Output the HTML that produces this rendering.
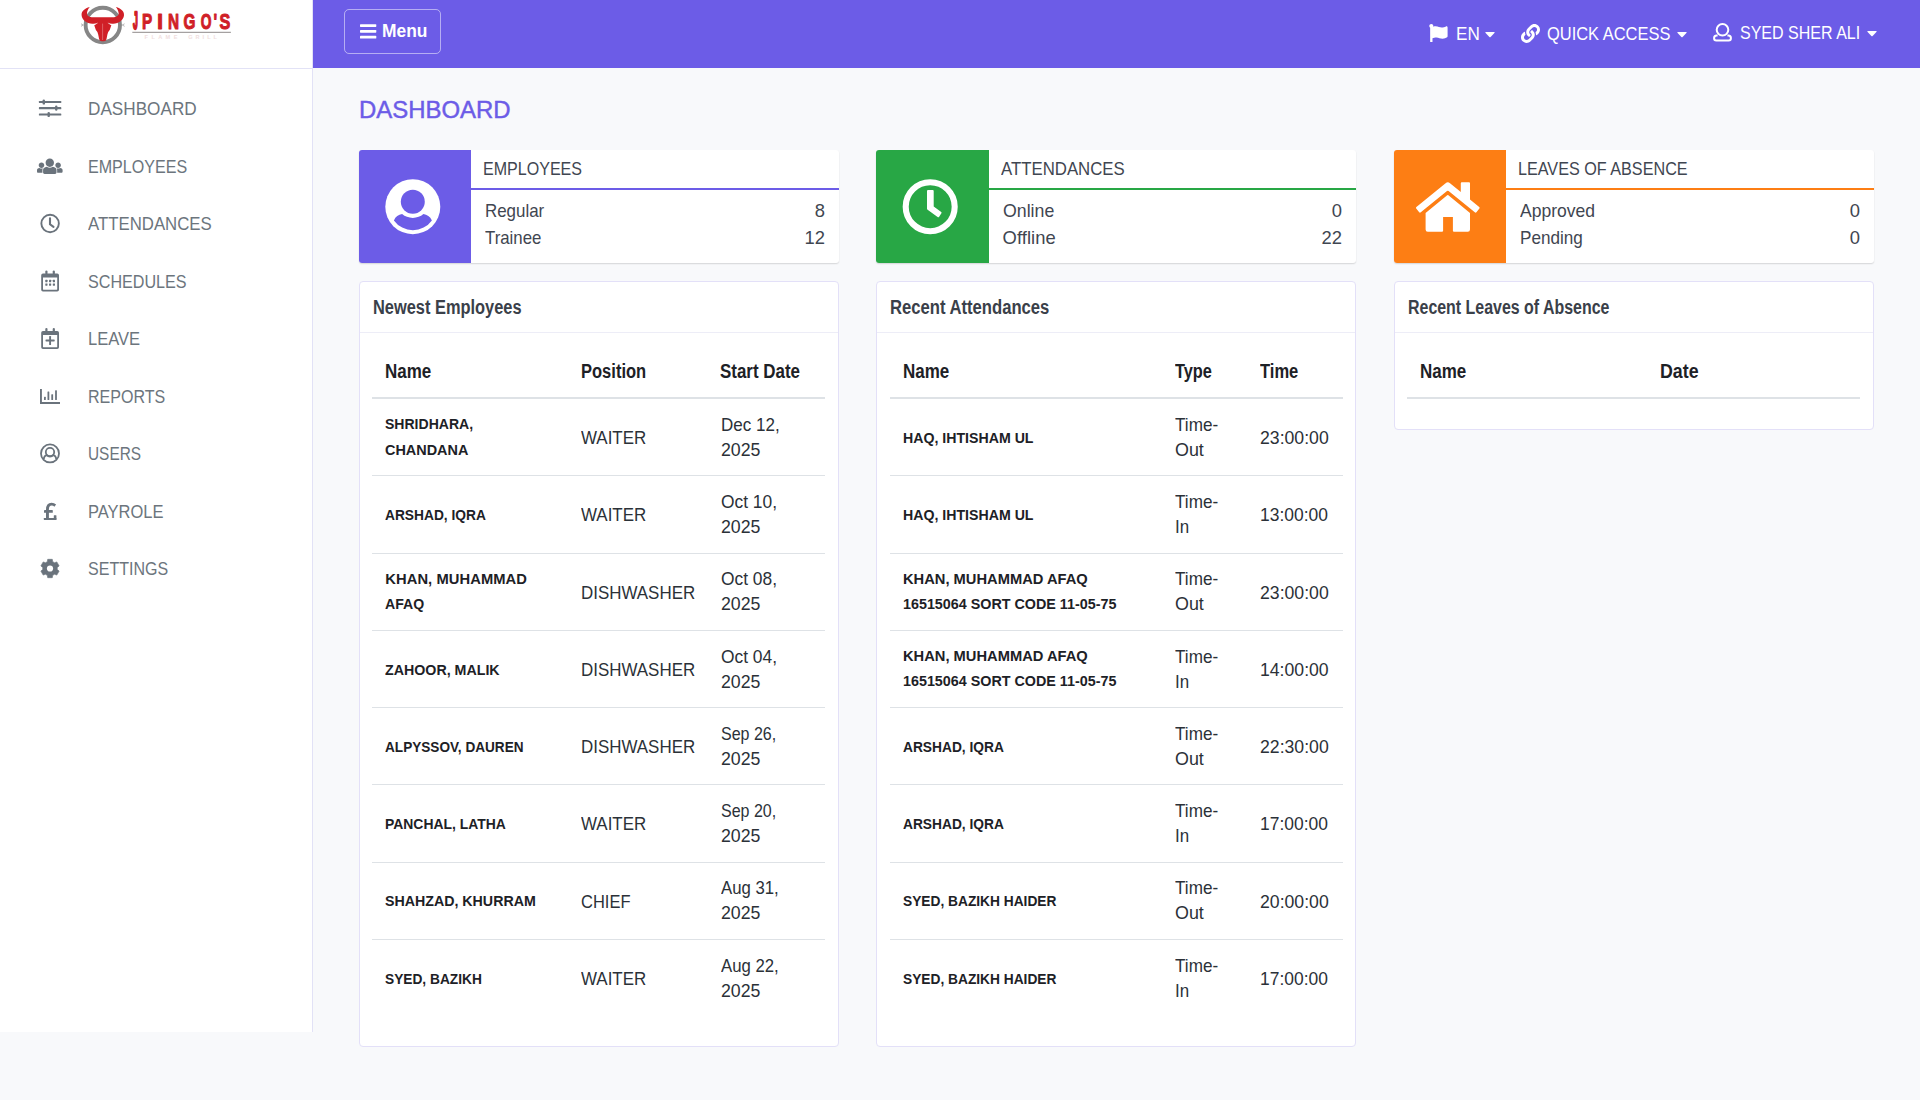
<!DOCTYPE html>
<html lang="en">
<head>
<meta charset="utf-8">
<title>Dashboard</title>
<style>
*{box-sizing:border-box;margin:0;padding:0}
html,body{width:1920px;height:1100px;overflow:hidden}
body{background:#f8f9fb;font-family:"Liberation Sans",sans-serif;color:#212529;font-size:17.6px;line-height:25.14px;position:relative}
svg{display:block}
.t{white-space:nowrap;display:inline-block;transform-origin:0 50%}
#sidebar{position:absolute;left:0;top:0;width:313px;height:1032px;background:#fff;border-right:1px solid #e2e2f6}
#logo{position:absolute;left:0;top:0;width:312px;height:69px;border-bottom:1px solid #e2e2f6}
#nav{position:absolute;left:0;top:0;width:312px;list-style:none}
#nav li{height:80px;position:absolute;left:0;width:312px;color:#6c757d;font-size:18px;line-height:80px;white-space:nowrap}
#nav li i{position:absolute;left:37px;top:28px;width:26px;height:24px;display:flex;align-items:center;justify-content:center}
#nav li b{position:absolute;left:87.6px;font-weight:normal}
#topbar{position:absolute;left:313px;top:0;width:1607px;height:68px;background:#6c5ce7;color:#fff}
#menubtn{position:absolute;left:31px;top:9px;width:97px;height:45px;border:1px solid rgba(255,255,255,.5);border-radius:5px}
#menubtn i{position:absolute;left:15px;top:13.6px}
#menubtn .t{position:absolute;left:36.5px;top:0;line-height:41.7px;font-size:19.2px;font-weight:bold}
.tb{position:absolute;top:0;height:68px;line-height:68px;font-size:18px;white-space:nowrap}
.tbi{position:absolute}
h1{position:absolute;left:358.7px;top:93.1px;font-size:24px;line-height:34px;font-weight:normal;color:#6c5ce7;white-space:nowrap;-webkit-text-stroke:.45px #6c5ce7}
.stat{position:absolute;top:150px;width:480px;height:113px;background:#fff;border-radius:3px;box-shadow:0 1px 1.5px rgba(0,0,0,.14);overflow:hidden}
.stat .ib{position:absolute;left:0;top:0;width:112px;height:113px}
.stat .tt{position:absolute;left:112px;top:0;right:0;height:40px;border-bottom:2px solid;padding-left:12px;font-size:18px;line-height:39px;color:#3f4651;white-space:nowrap}
.stat .rw{position:absolute;left:125.5px;right:14px;font-size:18.4px;line-height:27px;color:#3f4651}
.stat .rw b{font-weight:normal;float:right}
.panel{position:absolute;top:281px;width:480px;background:#fff;border:1px solid #e3e0f8;border-radius:4px}
.panel .ph{height:51px;border-bottom:1px solid #ededf7;padding-left:12.5px;font-size:19.4px;font-weight:bold;line-height:51.2px;color:#3a4049;white-space:nowrap}
.panel .pb{padding:11.84px 12px 0 12px}
table{border-collapse:collapse;table-layout:fixed;width:453px}
th{text-align:left;font-size:19.4px;font-weight:bold;color:#1d2126;padding:13.3px 0 12.7px 13px;border-bottom:2px solid #dee2e6;line-height:26.29px;white-space:nowrap}
td{padding:13.5px 0 12.46px 13.3px;border-top:1px solid #dee2e6;vertical-align:middle;font-size:18.4px;line-height:25.14px;color:#2b3138;height:77.25px;white-space:nowrap}
tbody tr:first-child td{border-top:none}
td.m{padding-top:12.7px;padding-bottom:13.26px}
td.n .t{position:relative;top:-1.4px;line-height:1;font-size:14.72px;font-weight:bold;color:#1d2126}
</style>
</head>
<body>
<div id="sidebar">
<div id="logo"><svg width="312" height="68" viewBox="0 0 312 68"><g transform="translate(76,0)"><circle cx="26.8" cy="25" r="17.2" fill="none" stroke="#868686" stroke-width="3.9"/><path d="M5 23.8l2.3 1.2-2.300 1.300M48.600 23.800l-2.300 1.200 2.300 1.300" stroke="#9a9a9a" stroke-width=".7" fill="none"/><path d="M26.80 17.30L15.60 17.30C12.60 17.00 10.60 15.00 11.00 13.00C11.30 10.60 12.30 8.60 13.80 7.00C8.60 8.20 5.20 11.50 5.60 15.20C6.00 20.00 11.50 24.30 17.50 23.70C19.00 23.60 20.50 23.20 21.80 22.70L18.20 25.50C19.00 26.80 19.20 28.60 19.90 29.90L21.40 31.90L22.20 34.60L23.10 39.00Q23.50 41.30 25.60 41.30L26.80 41.30L28.00 41.30Q30.10 41.30 30.50 39.00L31.40 34.60L32.20 31.90L33.70 29.90C34.40 28.60 34.60 26.80 35.40 25.50L31.80 22.70C33.10 23.20 34.60 23.60 36.10 23.70C42.10 24.30 47.60 20.00 48.00 15.20C48.40 11.50 45.00 8.20 39.80 7.00C41.30 8.60 42.30 10.60 42.60 13.00C43.00 15.00 41.00 17.00 38.00 17.30L26.80 17.30Z" fill="#d01f27"/><path d="M26.6 23.6V40M21.8 22.9L18.700 24.600M31.800 22.900L34.900 24.600" stroke="#fff" stroke-opacity=".55" stroke-width=".55" fill="none"/></g><g aria-label="JPINGO&#39;S"><text transform="translate(132.9,29.2) scale(0.36,1)" font-family="Liberation Sans, sans-serif" font-weight="bold" font-size="23.9" fill="#d01f27" stroke="#d01f27" stroke-width="1.9" stroke-linejoin="round" style="vector-effect:non-scaling-stroke">J</text><text transform="translate(141.9,29.4) scale(0.7,1)" font-family="Liberation Sans, sans-serif" font-weight="bold" font-size="21.9" fill="#d01f27" stroke="#d01f27" stroke-width="0.9" stroke-linejoin="round" style="vector-effect:non-scaling-stroke">P</text><text transform="translate(157.0,29.4) scale(1.0,1)" font-family="Liberation Sans, sans-serif" font-weight="bold" font-size="21.9" fill="#d01f27" stroke="#d01f27" stroke-width="0.9" stroke-linejoin="round" style="vector-effect:non-scaling-stroke">I</text><text transform="translate(168.0,29.4) scale(0.7,1)" font-family="Liberation Sans, sans-serif" font-weight="bold" font-size="21.9" fill="#d01f27" stroke="#d01f27" stroke-width="0.9" stroke-linejoin="round" style="vector-effect:non-scaling-stroke">N</text><text transform="translate(183.4,29.4) scale(0.7,1)" font-family="Liberation Sans, sans-serif" font-weight="bold" font-size="21.9" fill="#d01f27" stroke="#d01f27" stroke-width="0.9" stroke-linejoin="round" style="vector-effect:non-scaling-stroke">G</text><text transform="translate(200.7,29.4) scale(0.63,1)" font-family="Liberation Sans, sans-serif" font-weight="bold" font-size="21.9" fill="#d01f27" stroke="#d01f27" stroke-width="0.9" stroke-linejoin="round" style="vector-effect:non-scaling-stroke">O</text><text transform="translate(213.6,29.4) scale(0.7,1)" font-family="Liberation Sans, sans-serif" font-weight="bold" font-size="21.9" fill="#d01f27" stroke="#d01f27" stroke-width="0.9" stroke-linejoin="round" style="vector-effect:non-scaling-stroke">'</text><text transform="translate(219.4,29.4) scale(0.74,1)" font-family="Liberation Sans, sans-serif" font-weight="bold" font-size="21.9" fill="#d01f27" stroke="#d01f27" stroke-width="0.9" stroke-linejoin="round" style="vector-effect:non-scaling-stroke">S</text></g><rect x="132.3" y="31.8" width="98.6" height="1" fill="#8f8b8b"/><text x="144.6" y="39" font-family="Liberation Sans, sans-serif" font-weight="bold" font-size="5.6" fill="#f0dede" textLength="32.8" lengthAdjust="spacing">FLAME</text><text x="188.2" y="39" font-family="Liberation Sans, sans-serif" font-weight="bold" font-size="5.6" fill="#f0dede" textLength="28.8" lengthAdjust="spacing">GRILL</text></svg></div>
<ul id="nav">
<li style="top:68px"><i><svg width="26" height="24" viewBox="0 0 26 24" style=""><g transform="translate(0,0.60)"><g fill="#6a737c">
<rect x="1.9" y="4.3" width="22.4" height="2.2" rx=".6"/><rect x="1.9" y="10.5" width="22.4" height="2.2" rx=".6"/><rect x="1.9" y="16.8" width="22.4" height="2.2" rx=".6"/>
<rect x="5.6" y="2.8" width="2.4" height="5.2" rx="1.2"/><rect x="18.05" y="9" width="2.4" height="5.2" rx="1.2"/><rect x="10.5" y="15.3" width="2.4" height="5.2" rx="1.2"/></g></g></svg></i><b style="top:1.30px"><span class="t nv" style="transform:scaleX(0.9533)">DASHBOARD</span></b></li>
<li style="top:126px"><i><svg width="25.6" height="20.48" viewBox="0 0 640 512" style=""><g transform="translate(0,0.10)"><path fill="#6a737c" d="M320 64c57.99 0 105 47.01 105 105s-47.01 105-105 105-105-47.01-105-105S262.01 64 320 64zm113.463 217.366l-39.982-9.996c-49.168 35.365-108.766 27.473-146.961 0l-39.982 9.996C174.485 289.379 152 318.177 152 351.216V412c0 19.882 16.118 36 36 36h264c19.882 0 36-16.118 36-36v-60.784c0-33.039-22.485-61.837-54.537-69.85zM528 300c38.66 0 70-31.34 70-70s-31.34-70-70-70-70 31.34-70 70 31.34 70 70 70zm-416 0c38.66 0 70-31.34 70-70s-31.34-70-70-70-70 31.34-70 70 31.34 70 70 70zm24 112v-60.784c0-16.551 4.593-32.204 12.703-45.599-29.988 14.72-63.336 8.708-85.69-7.37l-26.655 6.664C14.99 310.252 0 329.452 0 351.477V392c0 13.255 10.745 24 24 24h112.169a52.417 52.417 0 0 1-.169-4zm467.642-107.09l-26.655-6.664c-27.925 20.086-60.89 19.233-85.786 7.218C499.369 318.893 504 334.601 504 351.216V412c0 1.347-.068 2.678-.169 4H616c13.255 0 24-10.745 24-24v-40.523c0-22.025-14.99-41.225-36.358-46.567z"/></g></svg></i><b style="top:0.80px"><span class="t nv" style="transform:scaleX(0.8933)">EMPLOYEES</span></b></li>
<li style="top:183px"><i><svg width="26" height="24" viewBox="0 0 26 24" style=""><g transform="translate(0,0.60)"><circle cx="13.1" cy="11.9" r="8.75" fill="none" stroke="#6a737c" stroke-width="1.9"/>
<path d="M13 6.6V12.7L16.5 15.2" fill="none" stroke="#6a737c" stroke-width="2.1" stroke-linecap="round" stroke-linejoin="miter"/></g></svg></i><b style="top:1.30px"><span class="t nv" style="transform:scaleX(0.9323)">ATTENDANCES</span></b></li>
<li style="top:241px"><i><svg width="26" height="24" viewBox="0 0 26 24" style=""><g transform="translate(0,0.10)"><g fill="#6a737c"><rect x="8.3" y="1.4" width="2.2" height="4.2" rx="1.1"/><rect x="15.7" y="1.4" width="2.2" height="4.2" rx="1.1"/>
<path fill-rule="evenodd" d="M6 4.3H20.2A1.8 1.8 0 0 1 22 6.1V20.6A1.8 1.8 0 0 1 20.2 22.4H6A1.8 1.8 0 0 1 4.2 20.6V6.1A1.8 1.8 0 0 1 6 4.3ZM6 8.4V20.2A.4 .4 0 0 0 6.4 20.6H19.8A.4 .4 0 0 0 20.2 20.2V8.4Z"/><rect x="8.3" y="10.75" width="2.2" height="2.3" rx=".4"/><rect x="12.0" y="10.75" width="2.2" height="2.3" rx=".4"/><rect x="15.799999999999999" y="10.75" width="2.2" height="2.3" rx=".4"/><rect x="8.3" y="14.35" width="2.2" height="2.3" rx=".4"/><rect x="12.0" y="14.35" width="2.2" height="2.3" rx=".4"/><rect x="15.799999999999999" y="14.35" width="2.2" height="2.3" rx=".4"/></g></g></svg></i><b style="top:0.80px"><span class="t nv" style="transform:scaleX(0.8962)">SCHEDULES</span></b></li>
<li style="top:298px"><i><svg width="26" height="24" viewBox="0 0 26 24" style=""><g transform="translate(0,0.60)"><g fill="#6a737c"><rect x="8.3" y="1.4" width="2.2" height="4.2" rx="1.1"/><rect x="15.7" y="1.4" width="2.2" height="4.2" rx="1.1"/>
<path fill-rule="evenodd" d="M6 4.3H20.2A1.8 1.8 0 0 1 22 6.1V20.6A1.8 1.8 0 0 1 20.2 22.4H6A1.8 1.8 0 0 1 4.2 20.6V6.1A1.8 1.8 0 0 1 6 4.3ZM6 8.4V20.2A.4 .4 0 0 0 6.4 20.6H19.8A.4 .4 0 0 0 20.2 20.2V8.4Z"/><rect x="8.5" y="12.9" width="9.2" height="1.9" rx=".6"/><rect x="12.15" y="9.3" width="1.9" height="9.2" rx=".6"/></g></g></svg></i><b style="top:1.30px"><span class="t nv" style="transform:scaleX(0.9193)">LEAVE</span></b></li>
<li style="top:356px"><i><svg width="26" height="24" viewBox="0 0 26 24" style=""><g transform="translate(0,0.10)"><g fill="#6a737c"><path d="M3 5H4.9V17.9H23V19.8H3Z"/>
<rect x="7" y="12.6" width="1.8" height="3.2" rx=".5"/><rect x="10.5" y="7.5" width="1.8" height="8.3" rx=".5"/><rect x="14.3" y="10.1" width="1.8" height="5.7" rx=".5"/><rect x="18.1" y="6.1" width="1.8" height="9.7" rx=".5"/></g></g></svg></i><b style="top:0.80px"><span class="t nv" style="transform:scaleX(0.8917)">REPORTS</span></b></li>
<li style="top:413px"><i><svg width="26" height="24" viewBox="0 0 26 24" style=""><g transform="translate(0,0.60)"><g fill="none" stroke="#6a737c" stroke-width="1.8"><circle cx="13" cy="11.8" r="9"/><circle cx="13" cy="10.4" r="4.2"/>
<path d="M6.7 17.6C7 15 8.200 13.700 9.700 13.500C10.600 14.500 11.700 15 13 15C14.300 15 15.400 14.500 16.300 13.500C17.800 13.700 19 15 19.300 17.600" stroke-linejoin="round"/></g></g></svg></i><b style="top:1.30px"><span class="t nv" style="transform:scaleX(0.8556)">USERS</span></b></li>
<li style="top:471px"><i><svg width="26" height="24" viewBox="0 0 26 24" style=""><g transform="translate(0,0.10)"><g fill="#6a737c"><path d="M9 20.8V10.6Q9 3.7 14.6 3.7Q17.2 3.7 19.1 5.4L17.4 7.6Q16.2 6.5 14.7 6.5Q11.9 6.5 11.9 10.4V20.8Z"/>
<rect x="7" y="11" width="8.8" height="2.7" rx=".4"/><rect x="6.8" y="18.9" width="12.6" height="1.9" rx=".4"/><rect x="16.8" y="16.1" width="2.6" height="4.7" rx=".4"/></g></g></svg></i><b style="top:0.80px"><span class="t nv" style="transform:scaleX(0.9156)">PAYROLE</span></b></li>
<li style="top:528px"><i><svg width="26" height="24" viewBox="0 0 26 24" style=""><g transform="translate(0,0.60)"><path d="M10.30 5.10L10.70 2.70L15.30 2.70L15.70 5.10A6.8 6.8 0 0 1 17.54 6.16L19.82 5.31L22.12 9.29L20.24 10.84A6.8 6.8 0 0 1 20.24 12.96L22.12 14.51L19.82 18.49L17.54 17.64A6.8 6.8 0 0 1 15.70 18.70L15.30 21.10L10.70 21.10L10.30 18.70A6.8 6.8 0 0 1 8.46 17.64L6.18 18.49L3.88 14.51L5.76 12.96A6.8 6.8 0 0 1 5.76 10.84L3.88 9.29L6.18 5.31L8.46 6.16Z" fill="#6a737c" stroke="#6a737c" stroke-width=".6" stroke-linejoin="round"/><circle cx="13" cy="11.9" r="3.1" fill="#fff"/></g></svg></i><b style="top:1.30px"><span class="t nv" style="transform:scaleX(0.8910)">SETTINGS</span></b></li>
</ul>
</div>
<div id="topbar"><div id="menubtn"><i><svg width="17" height="16" viewBox="0 0 17 16" style=""><g fill="#fff"><rect x="0" y=".2" width="16.3" height="2.7" rx=".6"/><rect x="0" y="6" width="16.3" height="2.7" rx=".6"/><rect x="0" y="11.8" width="16.3" height="2.7" rx=".6"/></g></svg></i><span class="t mn" style="transform:scaleX(0.9072)">Menu</span></div><div class="tbi" style="left:1116.3px;top:23.8px"><svg width="18.6" height="18.6" viewBox="0 0 512 512" style=""><path fill="#fff" d="M349.565 98.783C295.978 98.783 251.721 64 184.348 64c-24.955 0-47.309 4.384-68.045 12.013a55.947 55.947 0 0 0 3.586-23.562C118.117 24.015 94.806 1.206 66.338.048 34.345-1.254 8 24.296 8 56c0 19.026 9.497 35.825 24 45.945V488c0 13.255 10.745 24 24 24h16c13.255 0 24-10.745 24-24v-94.4c28.311-12.064 63.582-22.122 114.435-22.122 53.588 0 97.844 34.783 165.217 34.783 48.169 0 86.667-16.294 122.505-40.858C506.84 359.452 512 349.571 512 339.045v-243.1c0-23.393-24.269-38.87-45.485-29.016-34.338 15.948-76.454 31.854-116.95 31.854z"/></svg></div><div class="tb" style="left:1143.2px;line-height:68px"><span class="t tbt" style="transform:scaleX(0.9515)">EN</span></div><div class="tbi" style="left:1172.2px;top:32.1px"><svg width="10" height="6" viewBox="0 0 10 6" style=""><path d="M.9 0H9.1Q10.2 0 9.4.9L5.6 4.9Q5 5.5 4.4 4.9L.6.9Q-.2 0 .9 0Z" fill="#fff"/></svg></div><div class="tbi" style="left:1208.0px;top:24.0px"><svg width="19" height="19" viewBox="0 0 512 512" style=""><path fill="#fff" d="M326.612 185.391c59.747 59.809 58.927 155.698.36 214.59-.11.12-.24.25-.36.37l-67.2 67.2c-59.27 59.27-155.699 59.262-214.96 0-59.27-59.26-59.27-155.7 0-214.96l37.106-37.106c9.84-9.84 26.786-3.3 27.294 10.606.648 17.722 3.826 35.527 9.69 52.721 1.986 5.822.567 12.262-3.783 16.612l-13.087 13.087c-28.026 28.026-28.905 73.66-1.155 101.96 28.024 28.579 74.086 28.749 102.325.51l67.2-67.19c28.191-28.191 28.073-73.757 0-101.83-3.701-3.694-7.429-6.564-10.341-8.569a16.037 16.037 0 0 1-6.947-12.606c-.396-10.567 3.348-21.456 11.698-29.806l21.054-21.055c5.521-5.521 14.182-6.199 20.584-1.731a152.482 152.482 0 0 1 20.522 17.197zM467.547 44.449c-59.261-59.262-155.69-59.27-214.96 0l-67.2 67.2c-.12.12-.25.25-.36.37-58.566 58.892-59.387 154.781.36 214.59a152.454 152.454 0 0 0 20.521 17.196c6.402 4.468 15.064 3.789 20.584-1.731l21.054-21.055c8.35-8.35 12.094-19.239 11.698-29.806a16.037 16.037 0 0 0-6.947-12.606c-2.912-2.005-6.640-4.875-10.341-8.569-28.073-28.073-28.191-73.639 0-101.83l67.2-67.19c28.239-28.239 74.300-28.069 102.325.51 27.750 28.300 26.872 73.934-1.155 101.960l-13.087 13.087c-4.350 4.350-5.769 10.790-3.783 16.612 5.864 17.194 9.042 34.999 9.690 52.721.509 13.906 17.454 20.446 27.294 10.606l37.106-37.106c59.271-59.259 59.271-155.699.001-214.959z"/></svg></div><div class="tb" style="left:1234.4px;line-height:68px"><span class="t tbt" style="transform:scaleX(0.9138)">QUICK ACCESS</span></div><div class="tbi" style="left:1364.4px;top:32.1px"><svg width="10" height="6" viewBox="0 0 10 6" style=""><path d="M.9 0H9.1Q10.2 0 9.4.9L5.6 4.9Q5 5.5 4.4 4.9L.6.9Q-.2 0 .9 0Z" fill="#fff"/></svg></div><div class="tbi" style="left:1400.0px;top:23.0px"><svg width="19" height="20" viewBox="0 0 19 20" style=""><g fill="none" stroke="#fff" stroke-width="2"><circle cx="9.5" cy="6.8" r="5.8"/><path d="M4.6 12.600H3.600A2.500 2.500 0 0 0 1.100 15.100V15.200A2.200 2.200 0 0 0 3.300 17.400H15.700A2.200 2.200 0 0 0 17.900 15.200V15.100A2.500 2.500 0 0 0 15.400 12.600H14.400"/></g></svg></div><div class="tb" style="left:1426.8px;line-height:66px"><span class="t tbt" style="transform:scaleX(0.8899)">SYED SHER ALI</span></div><div class="tbi" style="left:1553.7px;top:31.3px"><svg width="10" height="6" viewBox="0 0 10 6" style=""><path d="M.9 0H9.1Q10.2 0 9.4.9L5.6 4.9Q5 5.5 4.4 4.9L.6.9Q-.2 0 .9 0Z" fill="#fff"/></svg></div></div>
<h1><span class="t h1t" style="transform:scaleX(0.9967)">DASHBOARD</span></h1>
<div class="stat" style="left:359px"><div class="ib" style="background:#6c5ce7;width:112px"><svg width="112" height="113" viewBox="0 0 112 113" style=""><circle cx="53.8" cy="56.7" r="27.5" fill="#fff"/><circle cx="53.8" cy="51.8" r="12" fill="#6c5ce7"/>
<path fill="#6c5ce7" d="M34.9 70.4C36.5 66.5 39.5 64.6 43.1 64.1C46 66.6 49.7 67.9 53.8 67.9C57.9 67.9 61.6 66.6 64.4 64.1C68 64.6 71.2 66.5 72.9 70.4A23.4 23.4 0 0 1 34.9 70.4Z"/></svg></div><div class="tt" style="border-color:#6c5ce7;left:112px;padding-left:12px"><span class="t stt" style="transform:scaleX(0.8915)">EMPLOYEES</span></div><div class="rw" style="top:47.3px;left:125.5px"><b>8</b><span class="t str" style="transform:scaleX(0.9197)">Regular</span></div><div class="rw" style="top:74.0px;left:125.5px"><b>12</b><span class="t str" style="transform:scaleX(0.9144)">Trainee</span></div></div>
<div class="stat" style="left:876px"><div class="ib" style="background:#28a745;width:113px"><svg width="113" height="113" viewBox="0 0 113 113" style=""><circle cx="54.2" cy="56.7" r="24.5" fill="none" stroke="#fff" stroke-width="6.1"/><path fill="#fff" d="M52 40.1H56.7Q57.7 40.1 57.7 41.1V56.4L65.2 61.9Q66 62.5 65.4 63.3L63 66.9Q62.4 67.7 61.6 67.1L51.6 59.8Q51 59.4 51 58.6V41.1Q51 40.1 52 40.1Z"/></svg></div><div class="tt" style="border-color:#28a745;left:113px;padding-left:12px"><span class="t stt" style="transform:scaleX(0.9323)">ATTENDANCES</span></div><div class="rw" style="top:47.3px;left:126.5px"><b>0</b><span class="t str" style="transform:scaleX(0.9652)">Online</span></div><div class="rw" style="top:74.0px;left:126.5px"><b>22</b><span class="t str" style="letter-spacing:0.083px">Offline</span></div></div>
<div class="stat" style="left:1394px"><div class="ib" style="background:#fd7e14;width:112px"><svg width="112" height="113" viewBox="0 0 112 113" style=""><g fill="#fff"><path d="M25.2 62.2L22.2 58.6Q21.5 57.7 22.4 57L51.6 33.2Q53.8 31.5 56 33.2L66.8 42V33.3Q66.8 32.3 67.8 32.3H75Q76 32.3 76 33.3V49.5L85.2 57Q86.100 57.7 85.4 58.6L82.4 62.2Q81.7 63 80.8 62.3L54.600 41Q53.8 40.4 53 41L26.800 62.3Q25.9 63 25.2 62.200Z"/>
<path d="M31.6 63L53.2 45.300Q53.800 44.800 54.400 45.300L76 63V79.600Q76 81.800 73.800 81.800H60Q58.900 81.800 58.900 80.700V67.100H49.100V80.700Q49.100 81.800 48 81.800H33.800Q31.600 81.800 31.600 79.600Z"/></g></svg></div><div class="tt" style="border-color:#fd7e14;left:112px;padding-left:12px"><span class="t stt" style="transform:scaleX(0.8986)">LEAVES OF ABSENCE</span></div><div class="rw" style="top:47.3px;left:125.5px"><b>0</b><span class="t str" style="transform:scaleX(0.9528)">Approved</span></div><div class="rw" style="top:74.0px;left:125.5px"><b>0</b><span class="t str" style="transform:scaleX(0.9310)">Pending</span></div></div>
<div class="panel" style="left:359px;height:766px"><div class="ph"><span class="t pht" style="transform:scaleX(0.8459)">Newest Employees</span></div><div class="pb" style="padding-left:12px"><table><colgroup><col style="width:196px"><col style="width:139.25px"><col style="width:117.75px"></colgroup><thead><tr><th><span class="t tht" style="transform:scaleX(0.8762)">Name</span></th><th><span class="t tht" style="transform:scaleX(0.8521)">Position</span></th><th><span class="t tht" style="transform:scaleX(0.8734)">Start Date</span></th></tr></thead><tbody><tr><td class="n m"><span class="t n" style="transform:scaleX(0.9532)">SHRIDHARA,</span><br><span class="t n" style="transform:scaleX(0.9805)">CHANDANA</span></td><td class="c"><span class="t c" style="transform:scaleX(0.9212)">WAITER</span></td><td class="c m"><span class="t c" style="transform:scaleX(0.9261)">Dec 12,</span><br><span class="t c" style="transform:scaleX(0.9645)">2025</span></td></tr><tr><td class="n"><span class="t n" style="transform:scaleX(0.9347)">ARSHAD, IQRA</span></td><td class="c"><span class="t c" style="transform:scaleX(0.9212)">WAITER</span></td><td class="c m"><span class="t c" style="transform:scaleX(0.9452)">Oct 10,</span><br><span class="t c" style="transform:scaleX(0.9645)">2025</span></td></tr><tr><td class="n m"><span class="t n" style="letter-spacing:0.076px">KHAN, MUHAMMAD</span><br><span class="t n" style="transform:scaleX(0.9582)">AFAQ</span></td><td class="c"><span class="t c" style="transform:scaleX(0.9209)">DISHWASHER</span></td><td class="c m"><span class="t c" style="transform:scaleX(0.9452)">Oct 08,</span><br><span class="t c" style="transform:scaleX(0.9645)">2025</span></td></tr><tr><td class="n"><span class="t n" style="transform:scaleX(0.9669)">ZAHOOR, MALIK</span></td><td class="c"><span class="t c" style="transform:scaleX(0.9209)">DISHWASHER</span></td><td class="c m"><span class="t c" style="transform:scaleX(0.9452)">Oct 04,</span><br><span class="t c" style="transform:scaleX(0.9645)">2025</span></td></tr><tr><td class="n"><span class="t n" style="transform:scaleX(0.9242)">ALPYSSOV, DAUREN</span></td><td class="c"><span class="t c" style="transform:scaleX(0.9209)">DISHWASHER</span></td><td class="c m"><span class="t c" style="transform:scaleX(0.8708)">Sep 26,</span><br><span class="t c" style="transform:scaleX(0.9645)">2025</span></td></tr><tr><td class="n"><span class="t n" style="transform:scaleX(0.9458)">PANCHAL, LATHA</span></td><td class="c"><span class="t c" style="transform:scaleX(0.9212)">WAITER</span></td><td class="c m"><span class="t c" style="transform:scaleX(0.8708)">Sep 20,</span><br><span class="t c" style="transform:scaleX(0.9645)">2025</span></td></tr><tr><td class="n"><span class="t n" style="transform:scaleX(0.9653)">SHAHZAD, KHURRAM</span></td><td class="c"><span class="t c" style="transform:scaleX(0.8962)">CHIEF</span></td><td class="c m"><span class="t c" style="transform:scaleX(0.9110)">Aug 31,</span><br><span class="t c" style="transform:scaleX(0.9645)">2025</span></td></tr><tr><td class="n"><span class="t n" style="transform:scaleX(0.9324)">SYED, BAZIKH</span></td><td class="c"><span class="t c" style="transform:scaleX(0.9212)">WAITER</span></td><td class="c m"><span class="t c" style="transform:scaleX(0.9110)">Aug 22,</span><br><span class="t c" style="transform:scaleX(0.9645)">2025</span></td></tr></tbody></table></div></div>
<div class="panel" style="left:876px;height:766px"><div class="ph"><span class="t pht" style="transform:scaleX(0.8580)">Recent Attendances</span></div><div class="pb" style="padding-left:12.5px"><table><colgroup><col style="width:272px"><col style="width:85.25px"><col style="width:95.75px"></colgroup><thead><tr><th><span class="t tht" style="transform:scaleX(0.8762)">Name</span></th><th><span class="t tht" style="transform:scaleX(0.8423)">Type</span></th><th><span class="t tht" style="transform:scaleX(0.8529)">Time</span></th></tr></thead><tbody><tr><td class="n"><span class="t n" style="transform:scaleX(0.9614)">HAQ, IHTISHAM UL</span></td><td class="c m"><span class="t c" style="transform:scaleX(0.9310)">Time-</span><br><span class="t c" style="transform:scaleX(0.9730)">Out</span></td><td class="c"><span class="t c" style="transform:scaleX(0.9598)">23:00:00</span></td></tr><tr><td class="n"><span class="t n" style="transform:scaleX(0.9614)">HAQ, IHTISHAM UL</span></td><td class="c m"><span class="t c" style="transform:scaleX(0.9310)">Time-</span><br><span class="t c" style="transform:scaleX(0.9210)">In</span></td><td class="c"><span class="t c" style="transform:scaleX(0.9486)">13:00:00</span></td></tr><tr><td class="n m"><span class="t n" style="transform:scaleX(0.9980)">KHAN, MUHAMMAD AFAQ</span><br><span class="t n" style="transform:scaleX(0.9733)">16515064 SORT CODE 11-05-75</span></td><td class="c m"><span class="t c" style="transform:scaleX(0.9310)">Time-</span><br><span class="t c" style="transform:scaleX(0.9730)">Out</span></td><td class="c"><span class="t c" style="transform:scaleX(0.9598)">23:00:00</span></td></tr><tr><td class="n m"><span class="t n" style="transform:scaleX(0.9980)">KHAN, MUHAMMAD AFAQ</span><br><span class="t n" style="transform:scaleX(0.9733)">16515064 SORT CODE 11-05-75</span></td><td class="c m"><span class="t c" style="transform:scaleX(0.9310)">Time-</span><br><span class="t c" style="transform:scaleX(0.9210)">In</span></td><td class="c"><span class="t c" style="transform:scaleX(0.9593)">14:00:00</span></td></tr><tr><td class="n"><span class="t n" style="transform:scaleX(0.9347)">ARSHAD, IQRA</span></td><td class="c m"><span class="t c" style="transform:scaleX(0.9310)">Time-</span><br><span class="t c" style="transform:scaleX(0.9730)">Out</span></td><td class="c"><span class="t c" style="transform:scaleX(0.9598)">22:30:00</span></td></tr><tr><td class="n"><span class="t n" style="transform:scaleX(0.9347)">ARSHAD, IQRA</span></td><td class="c m"><span class="t c" style="transform:scaleX(0.9310)">Time-</span><br><span class="t c" style="transform:scaleX(0.9210)">In</span></td><td class="c"><span class="t c" style="transform:scaleX(0.9486)">17:00:00</span></td></tr><tr><td class="n"><span class="t n" style="transform:scaleX(0.9333)">SYED, BAZIKH HAIDER</span></td><td class="c m"><span class="t c" style="transform:scaleX(0.9310)">Time-</span><br><span class="t c" style="transform:scaleX(0.9730)">Out</span></td><td class="c"><span class="t c" style="transform:scaleX(0.9598)">20:00:00</span></td></tr><tr><td class="n"><span class="t n" style="transform:scaleX(0.9333)">SYED, BAZIKH HAIDER</span></td><td class="c m"><span class="t c" style="transform:scaleX(0.9310)">Time-</span><br><span class="t c" style="transform:scaleX(0.9210)">In</span></td><td class="c"><span class="t c" style="transform:scaleX(0.9486)">17:00:00</span></td></tr></tbody></table></div></div>
<div class="panel" style="left:1394px;height:149px"><div class="ph"><span class="t pht" style="transform:scaleX(0.8222)">Recent Leaves of Absence</span></div><div class="pb" style="padding-left:12px"><table><colgroup><col style="width:240px"><col style="width:213px"></colgroup><thead><tr><th><span class="t tht" style="transform:scaleX(0.8762)">Name</span></th><th><span class="t tht" style="transform:scaleX(0.9164)">Date</span></th></tr></thead><tbody></tbody></table></div></div>
</body>
</html>
